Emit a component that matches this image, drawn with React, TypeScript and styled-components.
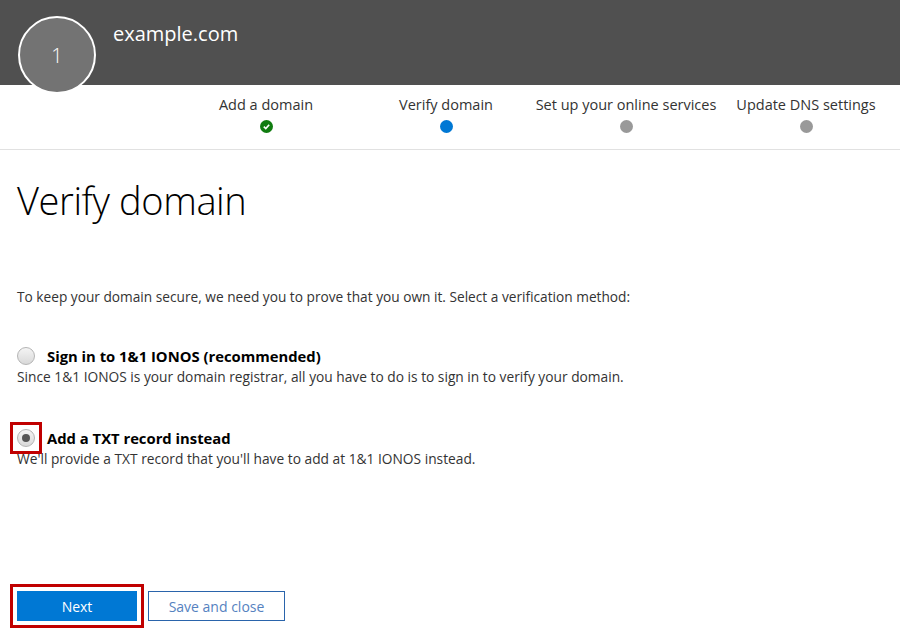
import React, { useState } from 'react';
import styled, { createGlobalStyle } from 'styled-components';

const GlobalStyle = createGlobalStyle`
    html, body {
        margin: 0;
        padding: 0;
        background: #ffffff;
    }
    body {
        font-family: "Open Sans", "Noto Sans", sans-serif;
        color: #333333;
    }
`;

const Page = styled.div`
    width: 900px;
    height: 637px;
    overflow: hidden;
`;

const Header = styled.header`
    height: 85px;
    background: #505050;
    display: flex;
    align-items: flex-start;
    padding: 16px 0 0 18px;
    box-sizing: border-box;
`;

const Badge = styled.div`
    position: relative;
    z-index: 2;
    flex: 0 0 78px;
    width: 78px;
    height: 78px;
    box-sizing: border-box;
    border-radius: 50%;
    border: 2px solid #ffffff;
    background: #737373;
    color: #ffffff;
    display: flex;
    align-items: center;
    justify-content: center;
    font-size: 20px;
    font-weight: 300;
`;

const DomainName = styled.h2`
    margin: 4px 0 0 17px;
    font-size: 20px;
    font-weight: 400;
    color: #ffffff;
`;

const Stepper = styled.nav`
    height: 65px;
    box-sizing: border-box;
    border-bottom: 1px solid #e1e1e1;
    display: grid;
    grid-template-columns: repeat(4, 180px);
    padding: 10px 0 0 176px;
`;

const Step = styled.div`
    display: flex;
    flex-direction: column;
    align-items: center;
    gap: 6px;
    font-size: 14.5px;
    color: #333333;
    white-space: nowrap;
`;

const Dot = styled.span<{ $state: 'done' | 'current' | 'todo' }>`
    width: 13px;
    height: 13px;
    border-radius: 50%;
    display: flex;
    align-items: center;
    justify-content: center;
    background: ${p => (p.$state === 'done' ? '#107c10' : p.$state === 'current' ? '#0078d4' : '#999999')};
`;

const Main = styled.main`
    padding: 0 17px;
`;

const Title = styled.h1`
    margin: 24px 0 0;
    font-size: 38px;
    font-weight: 300;
    color: #000000;
    letter-spacing: -0.4px;
`;

const Intro = styled.p`
    margin: 61px 0 0;
    font-size: 13.7px;
`;

const Options = styled.div`
    margin-top: 40px;
    display: flex;
    flex-direction: column;
    gap: 42px;
`;

const Option = styled.label`
    display: flex;
    flex-direction: column;
    cursor: pointer;
`;

const OptionHead = styled.div`
    display: flex;
    align-items: center;
    gap: 12px;
    font-size: 14.8px;
    font-weight: 700;
    color: #000000;
`;

const Highlight = styled.span<{ $on: boolean }>`
    display: inline-flex;
    margin: ${p => (p.$on ? '-7px' : '0')};
    padding: ${p => (p.$on ? '4px' : '0')};
    border: ${p => (p.$on ? '3px solid #c00000' : 'none')};
`;

const Radio = styled.span<{ $checked: boolean }>`
    width: 18px;
    height: 18px;
    box-sizing: border-box;
    border-radius: 50%;
    border: 1px solid #b4b4b4;
    background: linear-gradient(#f4f4f4, #d9d9d9);
    display: flex;
    align-items: center;
    justify-content: center;

    &::after {
        content: '';
        width: 8px;
        height: 8px;
        border-radius: 50%;
        background: #555555;
        display: ${p => (p.$checked ? 'block' : 'none')};
    }
`;

const OptionText = styled.div`
    margin-top: 1px;
    font-size: 13.75px;
    color: #333333;
`;

const Actions = styled.div`
    margin-top: 116px;
    display: flex;
    align-items: center;
    gap: 4px;
`;

const NextFrame = styled.div`
    margin-left: -7px;
    padding: 4px;
    border: 3px solid #c00000;
    display: flex;
`;

const Button = styled.button<{ $primary?: boolean }>`
    height: 30px;
    box-sizing: border-box;
    font-family: inherit;
    font-size: 14px;
    cursor: pointer;
    border: 1px solid ${p => (p.$primary ? '#0078d4' : '#2a64ab')};
    background: ${p => (p.$primary ? '#0078d4' : '#ffffff')};
    color: ${p => (p.$primary ? '#ffffff' : '#5582bf')};
    width: ${p => (p.$primary ? '120px' : '137px')};
`;

const steps: { label: string; state: 'done' | 'current' | 'todo' }[] = [
    { label: 'Add a domain', state: 'done' },
    { label: 'Verify domain', state: 'current' },
    { label: 'Set up your online services', state: 'todo' },
    { label: 'Update DNS settings', state: 'todo' },
];

export default function App() {
    const [method, setMethod] = useState<'signin' | 'txt'>('txt');

    return (
        <Page>
            <GlobalStyle />
            <Header>
                <Badge>1</Badge>
                <DomainName>example.com</DomainName>
            </Header>
            <Stepper>
                {steps.map(s => (
                    <Step key={s.label}>
                        {s.label}
                        <Dot $state={s.state}>
                            {s.state === 'done' && (
                                <svg width="9" height="9" viewBox="0 0 10 10">
                                    <path d="M2 5.2 L4.2 7.3 L8 3" fill="none" stroke="#fff" strokeWidth="1.8" />
                                </svg>
                            )}
                        </Dot>
                    </Step>
                ))}
            </Stepper>
            <Main>
                <Title>Verify domain</Title>
                <Intro>To keep your domain secure, we need you to prove that you own it. Select a verification method:</Intro>
                <Options>
                    <Option onClick={() => setMethod('signin')}>
                        <OptionHead>
                            <Highlight $on={false}>
                                <Radio $checked={method === 'signin'} />
                            </Highlight>
                            Sign in to 1&amp;1 IONOS (recommended)
                        </OptionHead>
                        <OptionText>Since 1&amp;1 IONOS is your domain registrar, all you have to do is to sign in to verify your domain.</OptionText>
                    </Option>
                    <Option onClick={() => setMethod('txt')}>
                        <OptionHead>
                            <Highlight $on={true}>
                                <Radio $checked={method === 'txt'} />
                            </Highlight>
                            Add a TXT record instead
                        </OptionHead>
                        <OptionText>We'll provide a TXT record that you'll have to add at 1&amp;1 IONOS instead.</OptionText>
                    </Option>
                </Options>
                <Actions>
                    <NextFrame>
                        <Button $primary>Next</Button>
                    </NextFrame>
                    <Button>Save and close</Button>
                </Actions>
            </Main>
        </Page>
    );
}
